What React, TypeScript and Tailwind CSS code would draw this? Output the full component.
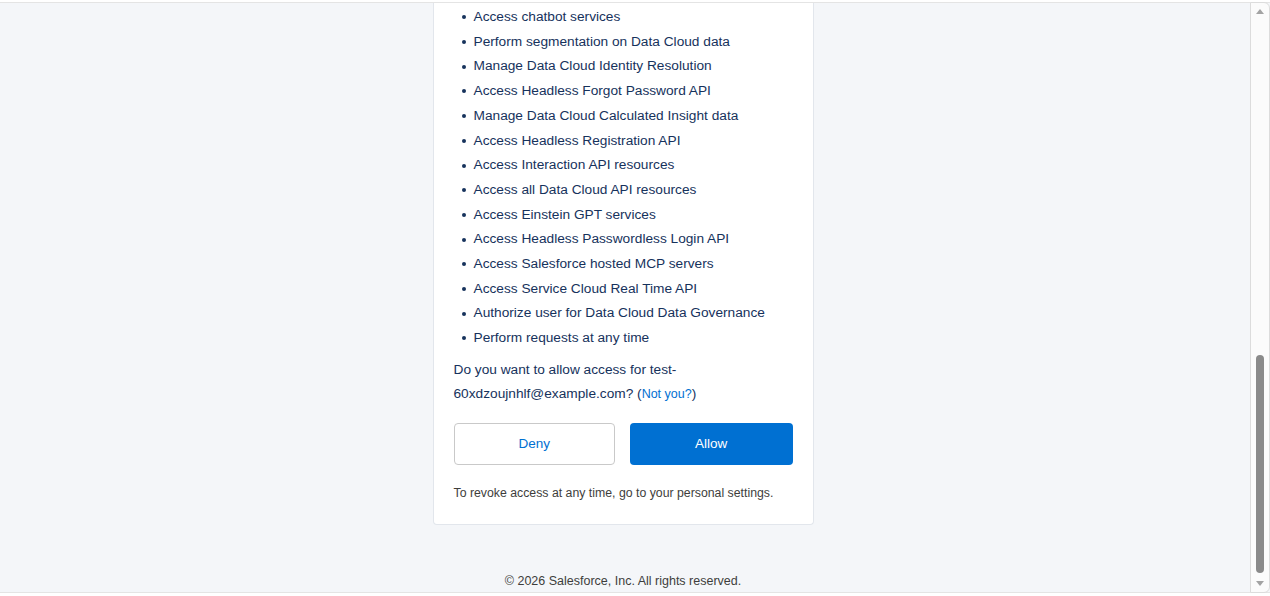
const scopes = [
  'Access chatbot services',
  'Perform segmentation on Data Cloud data',
  'Manage Data Cloud Identity Resolution',
  'Access Headless Forgot Password API',
  'Manage Data Cloud Calculated Insight data',
  'Access Headless Registration API',
  'Access Interaction API resources',
  'Access all Data Cloud API resources',
  'Access Einstein GPT services',
  'Access Headless Passwordless Login API',
  'Access Salesforce hosted MCP servers',
  'Access Service Cloud Real Time API',
  'Authorize user for Data Cloud Data Governance',
  'Perform requests at any time',
]

export default function App() {
  return (
    <div className="h-[596px] w-[1270px] overflow-hidden bg-white font-['Liberation_Sans',Arial,sans-serif] text-[#16325c]">
      <div className="mt-[2px] flex h-[591px] border-y border-[#e4e4e4] bg-[#f4f6f9]">
        <main className="mr-[4px] flex flex-1 flex-col items-center">
          <div className="w-[381px] rounded-b-[4px] border-x border-b border-[#e2e6ec] bg-white px-5 pb-[23px]">
            <ul className="pt-[2px]">
              {scopes.map((s) => (
                <li key={s} className="flex items-center text-[13.7px] leading-[24.7px]">
                  <span className="ml-[8px] mr-[8px] h-[4px] w-[4px] rounded-full bg-[#16325c]" />
                  {s}
                </li>
              ))}
            </ul>
            <p className="mt-[7px] text-[13.7px] leading-[24px]">
              Do you want to allow access for test-
              <br />
              60xdzoujnhlf@example.com? (<span className="text-[12.5px] text-[#0070d2]">Not you?</span>)
            </p>
            <div className="mt-[17px] flex gap-[15px]">
              <button className="h-[42px] w-[162px] rounded-[4px] border border-[#c9c9c9] bg-white text-[13.5px] text-[#0070d2]">
                Deny
              </button>
              <button className="h-[42px] w-[163px] rounded-[4px] bg-[#0070d2] text-[13.5px] text-white">
                Allow
              </button>
            </div>
            <p className="mt-[20px] text-[12.3px] leading-[16px] text-[#3e3e3c]">
              To revoke access at any time, go to your personal settings.
            </p>
          </div>
          <div className="mt-auto mb-[3px] text-[12.5px] leading-[16px] text-[#3e3e3c]">
            © 2026 Salesforce, Inc. All rights reserved.
          </div>
        </main>
        <div className="my-[-1px] flex w-[20px] flex-col items-center rounded-r-[6px] border border-[#dcdcdc] bg-[#fbfbfb] py-[6px]">
          <div className="h-0 w-0 border-x-[4px] border-b-[5px] border-x-transparent border-b-[#a3a3a3]" />
          <div className="flex-1" />
          <div className="mb-[8px] h-[218px] w-[8px] rounded-full bg-[#8a8a8a]" />
          <div className="h-0 w-0 border-x-[4px] border-t-[5px] border-x-transparent border-t-[#a3a3a3]" />
        </div>
      </div>
    </div>
  )
}
